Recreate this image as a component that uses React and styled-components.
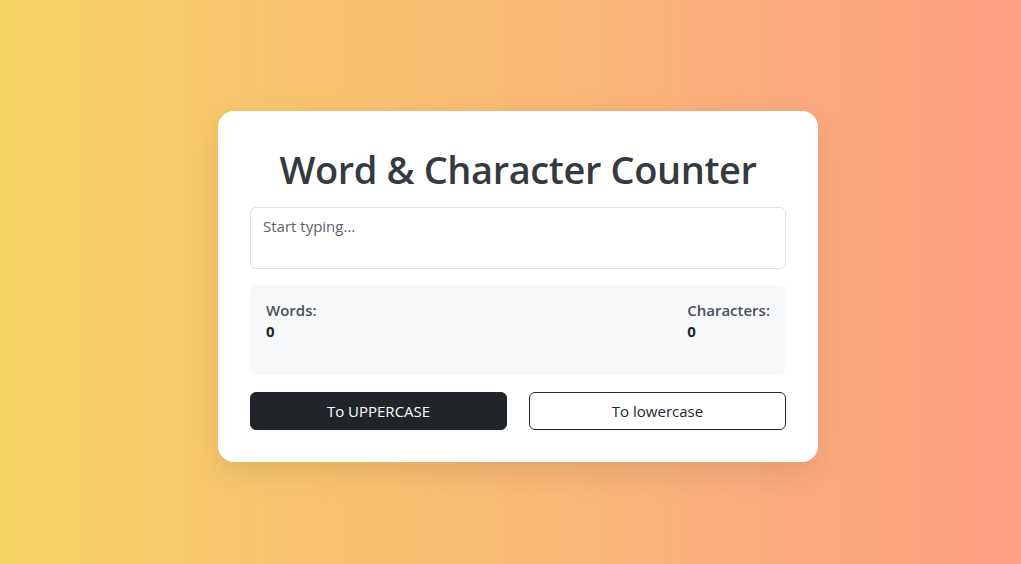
import React, { useState } from "react";
import styled, { createGlobalStyle } from "styled-components";

const Global = createGlobalStyle`
  html, body { margin: 0; padding: 0; }
  body {
    font-family: "Open Sans", "Noto Sans", "Liberation Sans", sans-serif;
    background: linear-gradient(to right, #f6d365, #fda085);
    min-height: 100vh;
  }
  * { box-sizing: border-box; }
`;

const Page = styled.div`
  min-height: 100vh;
  display: flex;
  align-items: center;
  justify-content: center;
  padding: 9px 0 0 15px;
`;

const Card = styled.div`
  width: 600px;
  background: #fff;
  border-radius: 16px;
  padding: 32px;
  box-shadow: 0 10px 30px rgba(0, 0, 0, 0.1);
  display: flex;
  flex-direction: column;
`;

const Title = styled.h1`
  margin: 0 0 14px;
  padding-top: 2px;
  font-size: 38px;
  line-height: 48px;
  font-weight: 600;
  color: #343a40;
  text-align: center;
  letter-spacing: -0.4px;
`;

const TextArea = styled.textarea`
  display: block;
  width: 100%;
  height: 62px;
  padding: 6px 12px;
  font-family: inherit;
  font-size: 15px;
  line-height: 24px;
  color: #212529;
  border: 1px solid #dee2e6;
  border-radius: 6px;
  resize: none;
  outline: none;
  margin-bottom: 16px;
  &::placeholder { color: #5c636a; }
`;

const Stats = styled.div`
  background: #f8f9fa;
  border-radius: 8px;
  padding: 15px 16px 33px;
  display: flex;
  justify-content: space-between;
  margin-bottom: 17px;
`;

const Stat = styled.div`
  display: flex;
  flex-direction: column;
`;

const Label = styled.span`
  font-size: 15px;
  line-height: 21px;
  font-weight: 600;
  color: #495057;
`;

const Value = styled.span`
  font-size: 15px;
  line-height: 21px;
  font-weight: 700;
  color: #212529;
`;

const Buttons = styled.div`
  display: grid;
  grid-template-columns: 1fr 1fr;
  gap: 22px;
`;

const Button = styled.button`
  height: 38px;
  border-radius: 6px;
  font-family: inherit;
  font-size: 15px;
  border: 1px solid #212529;
  background: ${(p) => (p.$dark ? "#212529" : "#fff")};
  color: ${(p) => (p.$dark ? "#fff" : "#212529")};
  cursor: pointer;
`;

export default function App() {
  const [text, setText] = useState("");
  const words = text.trim() ? text.trim().split(/\s+/).length : 0;
  return (
    <>
      <Global />
      <Page>
        <Card>
          <Title>Word &amp; Character Counter</Title>
          <TextArea
            rows={2}
            placeholder="Start typing..."
            value={text}
            onChange={(e) => setText(e.target.value)}
          />
          <Stats>
            <Stat>
              <Label>Words:</Label>
              <Value>{words}</Value>
            </Stat>
            <Stat>
              <Label>Characters:</Label>
              <Value>{text.length}</Value>
            </Stat>
          </Stats>
          <Buttons>
            <Button $dark onClick={() => setText(text.toUpperCase())}>To UPPERCASE</Button>
            <Button onClick={() => setText(text.toLowerCase())}>To lowercase</Button>
          </Buttons>
        </Card>
      </Page>
    </>
  );
}
